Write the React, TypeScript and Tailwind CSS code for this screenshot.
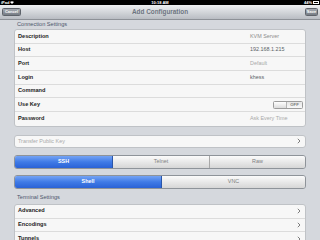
import React from "react";

const font = { fontFamily: '"Liberation Sans", Arial, sans-serif' };

function Chevron() {
  return (
    <svg width="4" height="6" viewBox="0 0 4 6" className="shrink-0">
      <path d="M0.8 0.8 L3 3 L0.8 5.2" fill="none" stroke="#7d7d7d" strokeWidth="1" />
    </svg>
  );
}

function Row({ label, value, tone, last, children }: { label: string; value?: string; tone?: "dark" | "light" | "mid"; last?: boolean; children?: React.ReactNode }) {
  const color = tone === "dark" ? "text-[#5a5f66]" : tone === "light" ? "text-[#a9a9a9]" : "text-[#8c8c8c]";
  return (
    <div className={`h-[13.7px] shrink-0 flex items-center ${last ? "" : "border-b border-[#dcdcdc]"}`}>
      <div className="w-[235px] pl-[3px] text-[5.6px] font-bold text-[#1c1c1c] leading-none">{label}</div>
      {value && <div className={`text-[5.4px] leading-none ${color}`}>{value}</div>}
      {children}
    </div>
  );
}

function NavRow({ label, last }: { label: string; last?: boolean }) {
  return (
    <div className={`h-[13.7px] shrink-0 flex items-center justify-between pl-[3px] pr-[4px] ${last ? "" : "border-b border-[#dcdcdc]"}`}>
      <div className="text-[5.6px] font-bold text-[#1c1c1c] leading-none">{label}</div>
      <Chevron />
    </div>
  );
}

export default function App() {
  return (
    <div className="w-[320px] h-[240px] overflow-hidden bg-[#d5d8dd] flex flex-col" style={font}>
      {/* status bar */}
      <div className="h-[5px] shrink-0 bg-black flex items-center justify-between px-[1px] text-white text-[4px] leading-none relative">
        <div className="flex items-center gap-[1px] font-bold">
          <span>iPad</span>
          <svg width="4" height="3" viewBox="0 0 4 3"><path d="M0 1 Q2 -0.6 4 1 L2 3 Z" fill="#fff" /></svg>
        </div>
        <div className="absolute left-0 right-0 text-center font-bold">10:18 AM</div>
        <div className="flex items-center gap-[1px] font-bold">
          <span>44%</span>
          <div className="w-[6px] h-[3px] border-[0.5px] border-white p-[0.5px]"><div className="w-[2px] h-full bg-white" /></div>
        </div>
      </div>
      {/* nav bar */}
      <div className="h-[15px] shrink-0 bg-gradient-to-b from-[#eef0f2] to-[#b9bdc3] border-b border-[#8d9197] flex items-center justify-between px-[2px] relative">
        <div className="h-[8px] w-[19px] rounded-[1.5px] bg-gradient-to-b from-[#a5aab1] to-[#767c84] border border-[#5e636a] flex items-center justify-center text-white text-[4px] font-bold leading-none">Cancel</div>
        <div className="absolute left-0 right-0 text-center text-[6.4px] font-bold text-[#6c7480] leading-none pointer-events-none">Add Configuration</div>
        <div className="h-[8px] w-[13px] rounded-[1.5px] bg-gradient-to-b from-[#a5aab1] to-[#767c84] border border-[#5e636a] flex items-center justify-center text-white text-[4px] font-bold leading-none">Save</div>
      </div>

      <div className="px-[14px] flex flex-col shrink-0">
        <div className="h-[9px] shrink-0 flex items-center pl-[3px] pt-[1px] text-[5.6px] text-[#4c566c] leading-none">Connection Settings</div>
        <div className="bg-[#f7f7f7] border border-[#bfc2c6] rounded-[3px] flex flex-col shrink-0">
          <Row label="Description" value="KVM Server" tone="mid" />
          <Row label="Host" value="192.168.1.215" tone="dark" />
          <Row label="Port" value="Default" tone="light" />
          <Row label="Login" value="khess" tone="dark" />
          <Row label="Command" />
          <div className="h-[13.7px] shrink-0 flex items-center justify-between border-b border-[#dcdcdc] pr-[2px]">
            <div className="pl-[3px] text-[5.6px] font-bold text-[#1c1c1c] leading-none">Use Key</div>
            <div className="w-[30px] h-[8px] rounded-[1.5px] border border-[#9c9c9c] flex overflow-hidden">
              <div className="w-[13px] h-full bg-gradient-to-b from-[#ffffff] to-[#dcdcdc] border-r border-[#b5b5b5]" />
              <div className="flex-1 bg-gradient-to-b from-[#e6e6e6] to-[#f8f8f8] flex items-center justify-center text-[4.2px] font-bold text-[#7a7a7a] leading-none">OFF</div>
            </div>
          </div>
          <Row label="Password" value="Ask Every Time" tone="light" last />
        </div>

        <div className="mt-[8px] h-[13px] shrink-0 bg-[#f7f7f7] border border-[#bfc2c6] rounded-[3px] flex items-center justify-between pl-[3px] pr-[4px]">
          <div className="text-[5.4px] text-[#a9a9a9] leading-none">Transfer Public Key</div>
          <Chevron />
        </div>

        <div className="mt-[7px] h-[14px] shrink-0 flex rounded-[3px] border border-[#8e9399] overflow-hidden text-[5.4px] font-bold leading-none">
          <div className="w-[98px] bg-gradient-to-b from-[#74a3f4] via-[#3f7ae6] to-[#2a62d6] text-white flex items-center justify-center border-r border-[#2b56a8]">SSH</div>
          <div className="w-[97px] bg-gradient-to-b from-[#fbfbfb] to-[#d6d6d6] text-[#7e7e7e] flex items-center justify-center border-r border-[#a8a8a8] font-normal">Telnet</div>
          <div className="flex-1 bg-gradient-to-b from-[#fbfbfb] to-[#d6d6d6] text-[#7e7e7e] flex items-center justify-center font-normal">Raw</div>
        </div>

        <div className="mt-[6px] h-[14px] shrink-0 flex rounded-[3px] border border-[#8e9399] overflow-hidden text-[5.4px] font-bold leading-none">
          <div className="w-[147px] bg-gradient-to-b from-[#74a3f4] via-[#3f7ae6] to-[#2a62d6] text-white flex items-center justify-center border-r border-[#2b56a8]">Shell</div>
          <div className="flex-1 bg-gradient-to-b from-[#fbfbfb] to-[#d6d6d6] text-[#7e7e7e] flex items-center justify-center font-normal">VNC</div>
        </div>

        <div className="h-[15px] shrink-0 flex items-end pb-[3px] pl-[3px] text-[5.6px] text-[#4c566c] leading-none">Terminal Settings</div>
        <div className="bg-[#f7f7f7] border border-[#bfc2c6] rounded-[3px] flex flex-col shrink-0">
          <NavRow label="Advanced" />
          <NavRow label="Encodings" />
          <NavRow label="Tunnels" last />
        </div>
      </div>
    </div>
  );
}
